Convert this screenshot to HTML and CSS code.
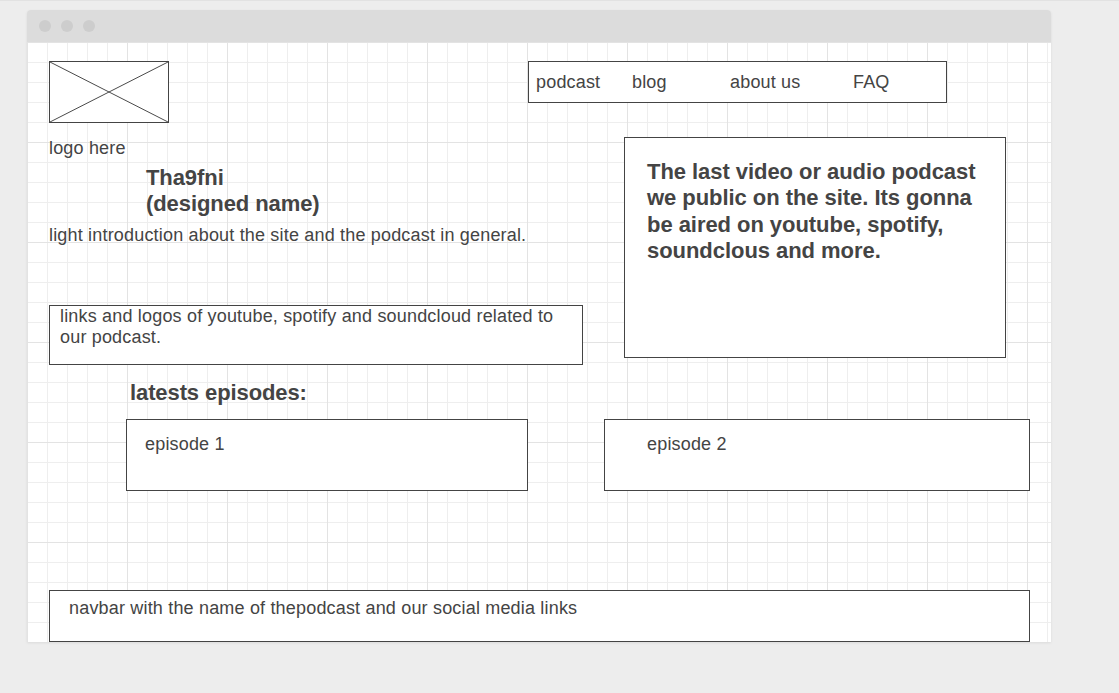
FILE: index.html
```html
<!DOCTYPE html>
<html lang="en">
<head>
<meta charset="utf-8">
<title>Tha9fni wireframe</title>
<link rel="stylesheet" href="styles.css">
</head>
<body>
<div class="window">
  <div class="titlebar">
    <span class="dot"></span><span class="dot"></span><span class="dot"></span>
  </div>
  <div class="canvas">
    <div class="row-top">
      <div class="logo-box">
        <svg width="118" height="60" viewBox="0 0 118 60" class="logo-x">
          <line x1="0" y1="0" x2="118" y2="60"></line>
          <line x1="118" y1="0" x2="0" y2="60"></line>
        </svg>
      </div>
      <nav class="nav-box">
        <span class="nav-item nav-podcast">podcast</span>
        <span class="nav-item nav-blog">blog</span>
        <span class="nav-item nav-about">about us</span>
        <span class="nav-item">FAQ</span>
      </nav>
    </div>
    <div class="row-mid">
      <div class="left-col">
        <p class="logo-label">logo here</p>
        <h1 class="site-name">Tha9fni<br>(designed name)</h1>
        <p class="intro">light introduction about the site and the podcast in general.</p>
        <div class="links-box">links and logos of youtube, spotify and soundcloud related to our podcast.</div>
      </div>
      <div class="feature-box">
        <p class="feature-text">The last video or audio podcast we public on the site. Its gonna be aired on youtube, spotify, soundclous and more.</p>
      </div>
    </div>
    <h2 class="episodes-title">latests episodes:</h2>
    <div class="episodes">
      <div class="episode ep-one">episode 1</div>
      <div class="episode ep-two">episode 2</div>
    </div>
    <footer class="footer-box">navbar with the name of thepodcast and our social media links</footer>
  </div>
</div>
</body>
</html>
```

FILE: styles.css
```css
html, body {
  margin: 0;
  padding: 0;
}
body {
  background: #ededed;
  border-top: 1px solid #e2e2e2;
  height: 692px;
  overflow: hidden;
  font-family: "Liberation Sans", Arial, sans-serif;
  color: #444;
}
.window {
  margin: 9px 0 0 27px;
  width: 1024px;
  border-radius: 4px 4px 0 0;
  box-shadow: 0 1px 3px rgba(0, 0, 0, 0.08);
  overflow: hidden;
}
.titlebar {
  height: 32px;
  background: #dcdcdc;
  display: flex;
  align-items: center;
  gap: 10px;
  padding-left: 12px;
}
.dot {
  width: 12px;
  height: 12px;
  border-radius: 50%;
  background: #cdcdcd;
}
.canvas {
  height: 600px;
  box-sizing: border-box;
  background-color: #fff;
  background-image:
    linear-gradient(to right, #e3e3e3 1px, transparent 1px),
    linear-gradient(to bottom, #e3e3e3 1px, transparent 1px),
    linear-gradient(to right, #eeeeee 1px, transparent 1px),
    linear-gradient(to bottom, #eeeeee 1px, transparent 1px);
  background-size: 100px 100px, 100px 100px, 20px 20px, 20px 20px;
  display: flex;
  flex-direction: column;
  padding-top: 19px;
}
.row-top {
  display: flex;
  padding-left: 22px;
}
.logo-box {
  width: 120px;
  height: 62px;
  box-sizing: border-box;
  border: 1px solid #444;
  background: #fff;
}
.logo-x {
  display: block;
}
.logo-x line {
  stroke: #4a4a4a;
  stroke-width: 1;
}
.nav-box {
  margin-left: 359px;
  width: 419px;
  height: 42px;
  box-sizing: border-box;
  border: 1px solid #444;
  background: #fff;
  display: flex;
  align-items: center;
  padding-left: 7px;
  font-size: 18px;
  letter-spacing: 0.18px;
}
.nav-item {
  line-height: 21px;
  padding-top: 1px;
}
.nav-podcast { width: 96px; }
.nav-blog { width: 98px; }
.nav-about { width: 123px; }

.row-mid {
  display: flex;
  align-items: flex-start;
  padding-left: 22px;
}
.left-col {
  width: 534px;
  display: flex;
  flex-direction: column;
}
.logo-label {
  margin: 15px 0 0;
  font-size: 18px;
  line-height: 21px;
  letter-spacing: 0.18px;
}
.site-name {
  margin: 6px 0 0 97px;
  font-size: 22px;
  line-height: 26px;
  font-weight: bold;
  letter-spacing: -0.08px;
}
.intro {
  margin: 8px 0 0;
  font-size: 18px;
  line-height: 21px;
  letter-spacing: 0.18px;
}
.links-box {
  margin-top: 59px;
  height: 60px;
  box-sizing: border-box;
  border: 1px solid #444;
  background: #fff;
  padding: 0 10px;
  font-size: 18px;
  line-height: 21px;
  letter-spacing: 0.18px;
}
.feature-box {
  margin: 14px 0 0 41px;
  width: 382px;
  height: 221px;
  box-sizing: border-box;
  border: 1px solid #444;
  background: #fff;
  padding: 21px 22px 0 22px;
}
.feature-text {
  margin: 0;
  font-size: 22px;
  line-height: 26.4px;
  font-weight: bold;
  letter-spacing: -0.05px;
}
.episodes-title {
  margin: 15px 0 0 103px;
  font-size: 22px;
  line-height: 26px;
  font-weight: bold;
  letter-spacing: -0.1px;
}
.episodes {
  display: flex;
  margin: 13px 0 0 99px;
  gap: 76px;
}
.episode {
  height: 72px;
  box-sizing: border-box;
  border: 1px solid #444;
  background: #fff;
  font-size: 18px;
  line-height: 21px;
  letter-spacing: 0.18px;
  padding-top: 14px;
}
.ep-one {
  width: 402px;
  padding-left: 18px;
}
.ep-two {
  width: 426px;
  padding-left: 42px;
}
.footer-box {
  margin: auto 0 0 22px;
  width: 981px;
  height: 52px;
  box-sizing: border-box;
  border: 1px solid #444;
  background: #fff;
  padding: 7px 0 0 19px;
  font-size: 18px;
  line-height: 21px;
  letter-spacing: 0.18px;
}
```
